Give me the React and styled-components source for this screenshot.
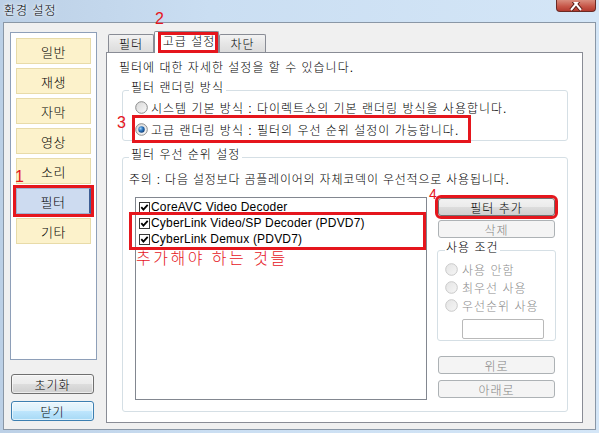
import styled, { createGlobalStyle } from 'styled-components';

const RED = '#e5161d';

const GlobalStyle = createGlobalStyle`
  html, body { margin: 0; padding: 0; background: #c6dbf0; }
  body {
    font-family: "Liberation Sans", "Noto Sans CJK KR", sans-serif;
    font-size: 12px;
    font-weight: 300;
    letter-spacing: 1px;
    color: #000;
  }
  * { box-sizing: border-box; }
`;

const navItems = ['일반', '재생', '자막', '영상', '소리', '필터', '기타'];
const filters = [
  'CoreAVC Video Decoder',
  'CyberLink Video/SP Decoder (PDVD7)',
  'CyberLink Demux (PDVD7)',
];

function Radio({ checked, disabled }) {
  const id = disabled ? 'rd' : checked ? 'rc' : 'ru';
  return (
    <svg width="13" height="13" viewBox="0 0 13 13">
      <defs>
        <linearGradient id={id + 'f'} x1="0" y1="0" x2="1" y2="1">
          <stop offset="0" stopColor={disabled ? '#e4e4e4' : '#d6d6d6'} />
          <stop offset="1" stopColor={disabled ? '#f6f6f6' : '#fbfbfb'} />
        </linearGradient>
        <radialGradient id={id + 'd'} cx="0.35" cy="0.35" r="0.7">
          <stop offset="0" stopColor="#9fd0f5" />
          <stop offset="0.5" stopColor="#2f78c0" />
          <stop offset="1" stopColor="#123f78" />
        </radialGradient>
      </defs>
      <circle cx="6.5" cy="6.5" r="5.8" fill={`url(#${id}f)`} stroke={disabled ? '#c9c9c9' : '#8b8c8c'} />
      {checked && <circle cx="6.5" cy="6.5" r="3.2" fill={`url(#${id}d)`} />}
    </svg>
  );
}

function Check() {
  return (
    <svg width="11" height="11" viewBox="0 0 11 11">
      <rect x="0.5" y="0.5" width="10" height="10" fill="#fff" stroke="#3a3a3a" />
      <path d="M2.3 5.2 L4.4 7.6 L8.7 2.8" fill="none" stroke="#000" strokeWidth="1.8" />
    </svg>
  );
}

export default function App() {
  return (
    <>
      <GlobalStyle />
      <Frame>
        <TitleBar>
          <Title>환경 설정</Title>
          <CloseButton>
            <svg width="14" height="9" viewBox="0 0 14 9">
              <path d="M2 -4 L12 8 M12 -4 L2 8" stroke="#5b1f19" strokeWidth="4" />
              <path d="M2 -4 L12 8 M12 -4 L2 8" stroke="#fff" strokeWidth="2" />
            </svg>
          </CloseButton>
        </TitleBar>

        <Body>
          <Sidebar>
            <NavPanel>
              {navItems.map((item) => (
                <NavButton key={item} $active={item === '필터'}>
                  {item === '필터' && <Mark $left={-2} $top={-20}>1</Mark>}
                  {item}
                </NavButton>
              ))}
            </NavPanel>
            <SideButton $mt={14}>초기화</SideButton>
            <SideButton $mt={7} $focused>닫기</SideButton>
          </Sidebar>

          <Main>
            <TabStrip>
              <Tab $w={46}>필터</Tab>
              <Tab $w={65} $active>
                <Mark $left={0} $top={-21}>2</Mark>
                <TabLabel>고급 설정</TabLabel>
              </Tab>
              <Tab $w={47}>차단</Tab>
            </TabStrip>

            <TabPage>
              <Intro>필터에 대한 자세한 설정을 할 수 있습니다.</Intro>

              <GroupBox $mt={6}>
                <Legend>필터 랜더링 방식</Legend>
                <Rows $mt={-3} $pl={6}>
                  <RadioRow $h={22}>
                    <Radio />
                    시스템 기본 방식 : 다이렉트쇼의 기본 랜더링 방식을 사용합니다.
                  </RadioRow>
                  <RadioRow $h={22} $marked>
                    <Mark $left={-18} $top={-3}>3</Mark>
                    <Radio checked />
                    고급 랜더링 방식 : 필터의 우선 순위 설정이 가능합니다.
                  </RadioRow>
                </Rows>
              </GroupBox>

              <GroupBox $mt={7} $pr={12} $pb={11}>
                <Legend>필터 우선 순위 설정</Legend>
                <Notice>주의 : 다음 설정보다 곰플레이어의 자체코덱이 우선적으로 사용됩니다.</Notice>
                <PriorityRow>
                  <FilterList>
                    <FilterItem>
                      <Check />
                      {filters[0]}
                    </FilterItem>
                    <MarkedItems>
                      {filters.slice(1).map((f) => (
                        <FilterItem key={f}>
                          <Check />
                          {f}
                        </FilterItem>
                      ))}
                    </MarkedItems>
                    <Note>추가해야 하는 것들</Note>
                  </FilterList>

                  <ButtonColumn>
                    <PushButton $marked>
                      <Mark $left={-10} $top={-12} $size={14}>4</Mark>
                      필터 추가
                    </PushButton>
                    <PushButton $mt={4} $disabled>삭제</PushButton>

                    <GroupBox $mt={3} $mx={-1} $pl={7} $pb={1}>
                      <Legend $tight>사용 조건</Legend>
                      <Rows $mt={1}>
                        <RadioRow $h={18} $gap={4} $disabled>
                          <Radio disabled />
                          사용 안함
                        </RadioRow>
                        <RadioRow $h={18} $gap={4} $disabled>
                          <Radio disabled />
                          최우선 사용
                        </RadioRow>
                        <RadioRow $h={18} $gap={4} $disabled>
                          <Radio disabled />
                          우선순위 사용
                        </RadioRow>
                      </Rows>
                      <OrderInput />
                    </GroupBox>

                    <PushButton $mt={15} $disabled>위로</PushButton>
                    <PushButton $mt={6} $disabled>아래로</PushButton>
                  </ButtonColumn>
                </PriorityRow>
              </GroupBox>
            </TabPage>
          </Main>
        </Body>
      </Frame>
    </>
  );
}

const Frame = styled.div`
  width: 599px;
  height: 433px;
  display: flex;
  flex-direction: column;
  padding: 0 3px 3px;
  background: linear-gradient(to right, #bcd0e6, #cadef2 35%, #d4e6f7);
  overflow: hidden;
`;

const TitleBar = styled.div`
  flex: none;
  height: 22px;
  margin: 0 -3px;
  padding-left: 4px;
  display: flex;
  align-items: flex-start;
  justify-content: space-between;
`;

const Title = styled.span`
  line-height: 22px;
  text-shadow: 0 0 6px #fff, 0 0 3px #fff;
`;

const CloseButton = styled.div`
  width: 40px;
  height: 12px;
  margin-right: 3px;
  border: 1px solid #6b2a24;
  border-top: none;
  border-radius: 0 0 4px 4px;
  background: linear-gradient(#d98c7d, #c65547 60%, #b33b30);
  display: flex;
  justify-content: center;
  align-items: flex-end;
  overflow: hidden;
`;

const Body = styled.div`
  flex: 1;
  display: flex;
  gap: 9px;
  padding: 7px 12px 6px 6px;
  background: #f0f0f0;
  border: 1px solid #8a97a6;
`;

const Sidebar = styled.div`
  width: 87px;
  margin-top: 2px;
  display: flex;
  flex-direction: column;
`;

const NavPanel = styled.div`
  height: 328px;
  padding: 5px;
  display: flex;
  flex-direction: column;
  gap: 4px;
  background: #fff;
  border: 1px solid #8e9fb8;
`;

const Mark = styled.span`
  position: absolute;
  left: ${(p) => p.$left}px;
  top: ${(p) => p.$top}px;
  font-family: "Liberation Sans", sans-serif;
  font-size: ${(p) => p.$size || 16}px;
  font-weight: 400;
  letter-spacing: 0;
  line-height: 1;
  color: ${RED};
`;

const NavButton = styled.div`
  position: relative;
  height: 26px;
  display: flex;
  align-items: center;
  justify-content: center;
  font-size: 13px;
  letter-spacing: 0.5px;
  background: ${(p) => (p.$active ? '#cddbf0' : '#fcf2cb')};
  border: 1px solid ${(p) => (p.$active ? '#9fb3d3' : '#e8dba8')};
  ${(p) =>
    p.$active &&
    `
    border-right: 2px solid #3d5e95;
    outline: 3px solid ${RED};
  `}
`;

const SideButton = styled.div`
  width: 83px;
  height: 20px;
  margin: ${(p) => p.$mt}px 0 0 1px;
  display: flex;
  align-items: center;
  justify-content: center;
  border-radius: 3px;
  border: 1px solid ${(p) => (p.$focused ? '#3c7fb1' : '#707070')};
  background: ${(p) =>
    p.$focused
      ? 'linear-gradient(#eaf6fd, #d9f0fc 50%, #bee6fd 50%, #a7d9f5)'
      : 'linear-gradient(#f2f2f2, #ebebeb 50%, #dddddd 50%, #cfcfcf)'};
  box-shadow: inset 0 0 0 1px rgba(255, 255, 255, 0.6);
`;

const Main = styled.div`
  width: 477px;
  display: flex;
  flex-direction: column;
`;

const TabStrip = styled.div`
  height: 22px;
  padding-left: 2px;
  display: flex;
  align-items: flex-end;
`;

const Tab = styled.div`
  position: relative;
  z-index: ${(p) => (p.$active ? 1 : 0)};
  width: ${(p) => p.$w}px;
  height: ${(p) => (p.$active ? 22 : 18)}px;
  margin-bottom: ${(p) => (p.$active ? -1 : 0)}px;
  display: flex;
  align-items: center;
  justify-content: center;
  border: 1px solid #898c95;
  border-bottom: none;
  border-radius: 2px 2px 0 0;
  background: ${(p) => (p.$active ? '#fff' : 'linear-gradient(#f3f3f3, #e6e6e6 50%, #dcdcdc)')};
`;

const TabLabel = styled.span`
  margin-left: 3px;
  padding: 0 0 0 2px;
  line-height: 15px;
  outline: 3px solid ${RED};
`;

const TabPage = styled.div`
  height: 371px;
  padding: 8px 14px 0 15px;
  background: #fff;
  border: 1px solid #898c95;
`;

const Intro = styled.div`
  margin-left: -3px;
  line-height: 14px;
`;

const GroupBox = styled.fieldset`
  margin: ${(p) => p.$mt || 0}px ${(p) => p.$mx || 0}px 0;
  padding: 0 ${(p) => p.$pr ?? 6}px ${(p) => p.$pb ?? 0}px ${(p) => p.$pl ?? 6}px;
  min-width: 0;
  border: 1px solid #d5dfe5;
  border-radius: 3px;
`;

const Legend = styled.legend`
  padding: 0 ${(p) => (p.$tight ? 1 : 2)}px 4px;
  line-height: 14px;
`;

const Rows = styled.div`
  margin-top: ${(p) => p.$mt || 0}px;
  padding-left: ${(p) => p.$pl || 0}px;
  display: flex;
  flex-direction: column;
`;

const RadioRow = styled.div`
  position: relative;
  width: fit-content;
  height: ${(p) => p.$h}px;
  display: flex;
  align-items: center;
  gap: ${(p) => p.$gap || 3}px;
  color: ${(p) => (p.$disabled ? '#8b8b8b' : '#000')};
  white-space: nowrap;
  ${(p) =>
    p.$marked &&
    `
    padding-right: 9px;
    outline: 3px solid ${RED};
  `}
`;

const Notice = styled.div`
  margin-top: 7px;
  line-height: 14px;
  letter-spacing: 0.8px;
`;

const PriorityRow = styled.div`
  margin-top: 10px;
  display: flex;
  gap: 11px;
`;

const FilterList = styled.div`
  width: 292px;
  height: 203px;
  margin-left: 6px;
  padding: 1px 0 0 3px;
  background: #fff;
  border: 1px solid #828790;
`;

const FilterItem = styled.div`
  height: 16px;
  display: flex;
  align-items: center;
  gap: 1px;
  letter-spacing: 0.2px;
  white-space: nowrap;
`;

const MarkedItems = styled.div`
  margin: 0 3px 0 -7px;
  padding-left: 7px;
  outline: 3px solid ${RED};
`;

const Note = styled.div`
  margin: 3px 0 0 -3px;
  font-size: 16px;
  line-height: 18px;
  letter-spacing: 2.5px;
  color: ${RED};
`;

const ButtonColumn = styled.div`
  width: 117px;
  margin-top: 1px;
  display: flex;
  flex-direction: column;
`;

const PushButton = styled.div`
  position: relative;
  height: 18px;
  margin-top: ${(p) => p.$mt || 0}px;
  display: flex;
  align-items: center;
  justify-content: center;
  border-radius: 3px;
  border: 1px solid ${(p) => (p.$disabled ? '#adb2b5' : '#707070')};
  color: ${(p) => (p.$disabled ? '#838383' : '#000')};
  background: ${(p) =>
    p.$disabled ? '#f4f4f4' : 'linear-gradient(#f2f2f2, #ebebeb 50%, #dddddd 50%, #cfcfcf)'};
  ${(p) => p.$marked && `outline: 3px solid ${RED};`}
`;

const OrderInput = styled.div`
  width: 82px;
  height: 20px;
  margin: 5px 0 0 17px;
  background: #fff;
  border: 1px solid #b9b9b9;
  border-radius: 2px;
`;
